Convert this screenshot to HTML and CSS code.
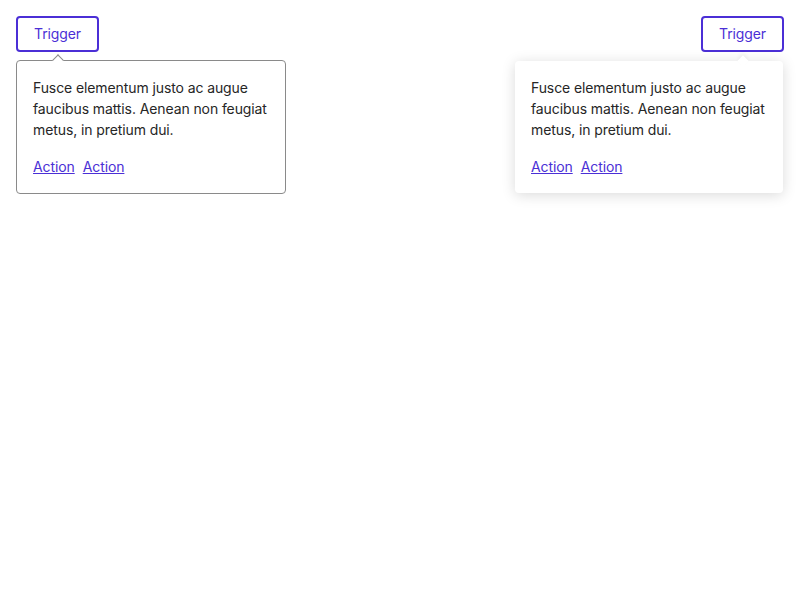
FILE: index.html
```html
<!DOCTYPE html>
<html>
<head>
<meta charset="utf-8">
<link rel="stylesheet" href="styles.css">
</head>
<body>
<div class="row">
  <div class="anchor anchor-start">
    <button class="trigger">Trigger</button>
    <div class="popover popover-bordered">
      <span class="caret caret-start"></span>
      <p class="text">Fusce elementum justo ac augue faucibus mattis. Aenean non feugiat metus, in pretium dui.</p>
      <div class="actions"><a href="#" class="link">Action</a><a href="#" class="link">Action</a></div>
    </div>
  </div>
  <div class="anchor anchor-end">
    <button class="trigger">Trigger</button>
    <div class="popover popover-shadow">
      <span class="caret caret-end"></span>
      <p class="text">Fusce elementum justo ac augue faucibus mattis. Aenean non feugiat metus, in pretium dui.</p>
      <div class="actions"><a href="#" class="link">Action</a><a href="#" class="link">Action</a></div>
    </div>
  </div>
</div>
</body>
</html>
```
FILE: styles.css
```css
* { box-sizing: border-box; }
html, body { margin: 0; background: #fff; }
body {
  padding: 16px;
  font-family: Inter, "Noto Sans", sans-serif;
  font-size: 14px;
  line-height: 21px;
  letter-spacing: -0.1px;
  color: #262626;
}
.row {
  display: flex;
  justify-content: space-between;
  align-items: flex-start;
}
.anchor {
  display: flex;
  flex-direction: column;
  gap: 8px;
}
.anchor-start { align-items: flex-start; }
.anchor-end { align-items: flex-end; }
.trigger {
  width: 83px;
  height: 36px;
  border: 2px solid #4b2fd6;
  border-radius: 4px;
  background: #fff;
  color: #4b2fd6;
  font-family: Inter, "Noto Sans", sans-serif;
  font-size: 14px;
  letter-spacing: -0.1px;
  padding: 0 0 2px;
  cursor: pointer;
}
.popover {
  position: relative;
  width: 270px;
  padding: 16px;
  background: #fff;
  border-radius: 4px;
}
.popover-bordered { border: 1px solid #8a8a8a; }
.popover-shadow {
  width: 268px;
  margin: 1px 1px 0 0;
  box-shadow: 0 2px 14px rgba(0, 0, 0, 0.15);
}
.caret {
  position: absolute;
  top: -5px;
  width: 8px;
  height: 8px;
  background: #fff;
  transform: rotate(45deg);
}
.caret-start {
  left: 37px;
  border-top: 1px solid #8a8a8a;
  border-left: 1px solid #8a8a8a;
}
.caret-end {
  top: -4px;
  right: 36px;
  box-shadow: -2px -2px 4px rgba(0, 0, 0, 0.05);
}
.text { margin: 0 0 16px; }
.actions {
  display: flex;
  gap: 8px;
}
.link {
  color: #4b2fd6;
  text-decoration: underline;
}
```
